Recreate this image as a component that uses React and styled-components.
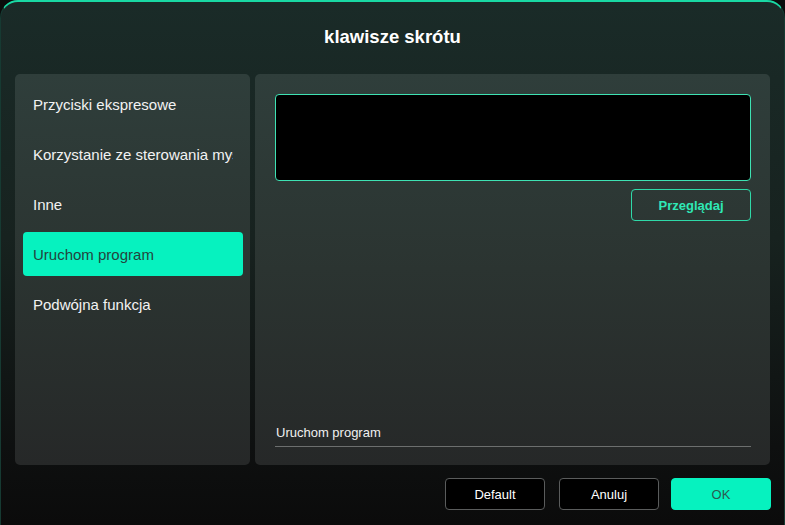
import styled, { createGlobalStyle } from "styled-components";

const GlobalStyle = createGlobalStyle`
  html, body { margin: 0; padding: 0; background: #0b0c0c; }
  body { font-family: Arial, "Liberation Sans", sans-serif; }
  * { box-sizing: border-box; }
`;

const Window = styled.div`
  width: 785px;
  height: 525px;
  border-radius: 18px 18px 0 0;
  border-top: 2px solid #19d9a4;
  border-left: 1px solid #163a32;
  border-right: 1px solid #163a32;
  background: linear-gradient(180deg, #1a2b28 0%, #17221f 45%, #0e1010 85%, #0b0b0b 100%);
  display: flex;
  flex-direction: column;
  padding: 0 14px 0 14px;
`;

const Title = styled.div`
  height: 72px;
  display: flex;
  align-items: center;
  justify-content: center;
  padding-bottom: 2px;
  color: #ffffff;
  font-size: 18.5px;
  font-weight: bold;
`;

const Body = styled.div`
  display: flex;
  gap: 5px;
  height: 391px;
`;

const Panel = styled.div`
  border-radius: 5px;
  background: linear-gradient(180deg, #2f3e3b 0%, #2b3431 50%, #262828 100%);
  width: ${(p) => p.$w}px;
  display: flex;
  flex-direction: column;
`;

const Menu = styled.div`
  display: flex;
  flex-direction: column;
  padding: 8px 7px 8px 8px;
  gap: 6px;
`;

const MenuItem = styled.div`
  height: 44px;
  border-radius: 4px;
  display: flex;
  align-items: center;
  padding: 0 10px;
  font-size: 15px;
  color: ${(p) => (p.$active ? "#23443d" : "#f2f2f2")};
  background: ${(p) => (p.$active ? "#06f2bf" : "transparent")};
`;

const MenuText = styled.span`
  display: block;
  width: 100%;
  white-space: nowrap;
  overflow: hidden;
`;

const Content = styled.div`
  flex: 1;
  display: flex;
  flex-direction: column;
  padding: 20px 19px 18px 20px;
`;

const PathBox = styled.div`
  height: 87px;
  background: #000;
  border: 1px solid #3ee2b3;
  border-radius: 4px;
`;

const BrowseRow = styled.div`
  display: flex;
  justify-content: flex-end;
  margin-top: 8px;
`;

const BrowseButton = styled.button`
  width: 120px;
  height: 32px;
  border: 1px solid #2fd9a8;
  border-radius: 4px;
  background: transparent;
  color: #2fe8b6;
  font-family: inherit;
  font-size: 13px;
  font-weight: bold;
`;

const Spacer = styled.div`
  flex: 1;
`;

const Label = styled.div`
  color: #f0f0f0;
  font-size: 13px;
  padding: 0 0 6px 1px;
  border-bottom: 1px solid #6c6f6e;
`;

const Footer = styled.div`
  display: flex;
  justify-content: flex-end;
  gap: 14px;
  padding-top: 13px;
  margin-right: -1px;
`;

const Button = styled.button`
  width: 100px;
  height: 32px;
  border-radius: 4px;
  font-family: inherit;
  font-size: 13px;
  border: 1px solid ${(p) => (p.$primary ? "#06f2bf" : "#5a5c5c")};
  background: ${(p) => (p.$primary ? "#06f2bf" : "#000")};
  color: ${(p) => (p.$primary ? "#2c5a50" : "#ffffff")};
  margin-left: ${(p) => (p.$primary ? -2 : 0)}px;
`;

const items = [
  "Przyciski ekspresowe",
  "Korzystanie ze sterowania myszą",
  "Inne",
  "Uruchom program",
  "Podwójna funkcja",
];

export default function App() {
  return (
    <>
      <GlobalStyle />
      <Window>
        <Title>klawisze skrótu</Title>
        <Body>
          <Panel $w={235}>
            <Menu>
              {items.map((t) => (
                <MenuItem key={t} $active={t === "Uruchom program"}>
                  <MenuText>{t}</MenuText>
                </MenuItem>
              ))}
            </Menu>
          </Panel>
          <Panel $w={515}>
            <Content>
              <PathBox />
              <BrowseRow>
                <BrowseButton>Przeglądaj</BrowseButton>
              </BrowseRow>
              <Spacer />
              <Label>Uruchom program</Label>
            </Content>
          </Panel>
        </Body>
        <Footer>
          <Button>Default</Button>
          <Button>Anuluj</Button>
          <Button $primary>OK</Button>
        </Footer>
      </Window>
    </>
  );
}
